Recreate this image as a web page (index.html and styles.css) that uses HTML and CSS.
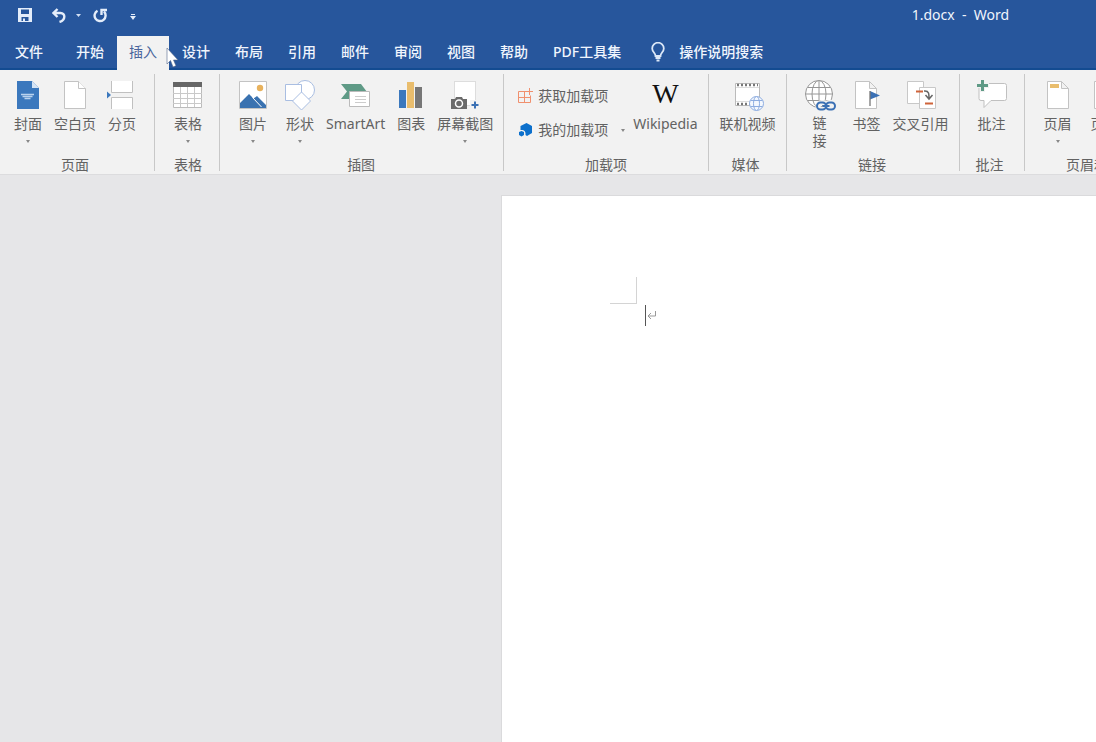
FILE: index.html
```html
<!DOCTYPE html>
<html lang="zh-CN">
<head>
<meta charset="utf-8">
<title>1.docx - Word</title>
<link rel="stylesheet" href="styles.css">
</head>
<body>
<header class="top">
  <div class="titlebar">
    <div class="quick">
      <button class="qbtn" aria-label="保存"><svg width="14" height="14" viewBox="0 0 14 14"><path fill="#e4edfa" fill-rule="evenodd" d="M0 0h14v14H0zM3 1.500v4.500h8V1.500zM3.500 9v4h1.500v-2.500h2V13h3.500V9z"/></svg></button>
      <button class="qbtn undo" aria-label="撤消"><svg width="14" height="15" viewBox="0 0 14 15" fill="none" stroke="#e4edfa" stroke-width="2.400"><path d="M5.500 1 1.500 5l4 4M2 5h6.500c5 0 5.500 7-1 9"/></svg></button>
      <button class="qbtn mini" aria-label="撤消选项"><svg width="5" height="3" viewBox="0 0 5 3"><path fill="#d3e0f3" d="M0 0h5L2.500 3z"/></svg></button>
      <button class="qbtn redo" aria-label="重复"><svg width="14" height="15" viewBox="0 0 14 15" fill="none" stroke="#e4edfa" stroke-width="2.400"><path d="M4.500 2.700a5.500 5.500 0 1 0 6.500 1M8.500 7V2H14"/></svg></button>
      <button class="qbtn custom" aria-label="自定义快速访问工具栏"><svg width="6" height="6" viewBox="0 0 6 6"><path fill="#e4edfa" d="M1 0h4v1H1zM0 2h6L3 6z"/></svg></button>
    </div>
    <h1 class="title">1.docx&nbsp; -&nbsp; Word</h1>
  </div>
  <nav class="tabs">
    <button class="tab file">文件</button>
    <button class="tab">开始</button>
    <button class="tab active">插入</button>
    <button class="tab">设计</button>
    <button class="tab">布局</button>
    <button class="tab">引用</button>
    <button class="tab">邮件</button>
    <button class="tab">审阅</button>
    <button class="tab">视图</button>
    <button class="tab">帮助</button>
    <button class="tab">PDF工具集</button>
    <button class="tab tell"><svg width="14" height="20" viewBox="0 0 14 20" fill="none" stroke="#dce8f8"><path stroke-width="1.800" d="M4.500 14c0-3-3.300-4-3.300-7.500a5.800 5.800 0 0 1 11.600 0C12.800 10 9.500 11 9.500 14z"/><path stroke-width="2" d="M4.500 16h5M5.500 18.500h3"/></svg>操作说明搜索</button>
  </nav>
  <svg class="pointer" width="13" height="21" viewBox="0 0 13 21"><path fill="#fff" stroke="#50658a" stroke-width=".6" d="M1 1v16l3.500-3.500L7 20l3-1.200L7.500 13H12z"/></svg>
</header>

<main>
<div class="ribbon">
  <section class="group pages">
    <div class="items">
      <button class="cmd"><svg class="icon" viewBox="0 0 32 32"><path fill="#3b78bd" d="M5 2h15l7 7v21H5z"/><path fill="#d5e4f5" d="M20 2v7h7z"/><path stroke="#b9d2ee" stroke-width="1.300" d="M9 15.500h13M10.500 17.500h10M12.500 19.500h6"/></svg><span>封面</span><i class="drop"></i></button>
      <button class="cmd"><svg class="icon" viewBox="0 0 32 32" fill="#fff" stroke="#c3c3c3"><path d="M5.500 2.500h14l7 7v20h-21z"/><path d="M19.500 2.500v7h7"/></svg><span>空白页</span></button>
      <button class="cmd"><svg class="icon" viewBox="0 0 32 32"><path fill="#fff" d="M6 2h21v12H6zM6 19h21v11H6z"/><path fill="none" stroke="#c0c0c0" d="M5.500 2v11.500h21V2M5.500 30V18.500h21V30"/><path fill="#3b78bd" d="M1 12.500v7l4-3.500z"/></svg><span>分页</span></button>
    </div>
    <h2>页面</h2>
  </section>
  <section class="group table">
    <div class="items">
      <button class="cmd"><svg class="icon" viewBox="0 0 32 32"><path fill="#fff" stroke="#bbb" d="M1.500 3.500h28v25h-28z"/><path fill="#666" d="M1 3h29v5H1z"/><path stroke="#c9c9c9" d="M1 14.500h29M1 19.500h29M1 24.500h29M8.500 8v20M15.500 8v20M22.500 8v20"/></svg><span>表格</span><i class="drop"></i></button>
    </div>
    <h2>表格</h2>
  </section>
  <section class="group art">
    <div class="items">
      <button class="cmd pic"><svg class="icon" viewBox="0 0 32 32"><path fill="#fff" stroke="#c3c3c3" d="M2.500 2.500h27v27h-27z"/><circle cx="23" cy="9" r="3.200" fill="#e8b25d"/><path fill="#3a72b0" d="M3 27v-3l9-9 4.500 4.500L20 17l9 9v3H3z"/><path stroke="#fff" d="m15.500 18.500 9 9.500"/></svg><span>图片</span><i class="drop"></i></button>
      <button class="cmd"><svg class="icon" viewBox="0 0 32 32" fill="#fff" stroke="#a9bee2"><circle cx="21" cy="11" r="9.500"/><path d="M1.500 5.500h16v16h-16z"/><path d="m17.500 13 9 9-9 9-9-9z"/></svg><span>形状</span><i class="drop"></i></button>
      <button class="cmd"><svg class="icon" viewBox="0 0 32 32"><path fill="#5f9a86" d="M1 5h20l6 8-3 7H1l6-7.500z"/><path fill="#fff" stroke="#bbb" d="M9.500 12.500h20v15h-20z"/><path stroke="#ccc" d="M15 17.500h11M15 20.500h11M15 23.500h11"/></svg><span>SmartArt</span></button>
      <button class="cmd"><svg class="icon" viewBox="0 0 32 32"><path fill="#3b78bd" d="M4 11h7v18H4z"/><path fill="#e9bd6d" d="M12 3h7v26h-7z"/><path fill="#777" d="M20 8h7v21h-7z"/></svg><span>图表</span></button>
      <button class="cmd"><svg class="icon" viewBox="0 0 32 32"><path fill="#fff" stroke="#c3c3c3" stroke-dasharray="1 1" d="M5.500 2.500h21v24h-21z"/><path fill="#6b6b6b" d="M2 20h4l1-2h6l1 2h4v10H2z"/><circle cx="10" cy="24.500" r="3.500" fill="none" stroke="#fff" stroke-width="1.500"/><path fill="#f2f2f2" d="M21 21h11v11H21z"/><path stroke="#3b70b4" stroke-width="2" d="M26 22.500v7M22.500 26h7"/></svg><span>屏幕截图</span><i class="drop"></i></button>
    </div>
    <h2>插图</h2>
  </section>
  <section class="group addins">
    <div class="items">
      <div class="stack">
        <button class="small"><svg width="15" height="16" viewBox="0 0 15 16" fill="none" stroke="#f0906e"><path d="M8.500 3.500h-8v11h12v-7M.5 9.500h12M6.500 3.500v11M11.500 0v7M8 3.500h7"/></svg>获取加载项</button>
        <button class="small"><svg width="15" height="16" viewBox="0 0 15 16"><path fill="#0c70cc" d="m8.500 1 5.500 3v7l-5 3-1.500-1C8 9.500 6 7.500 2.500 8V4zM1 10l2.500-1L6 10v3l-2.500 1.500L1 13z"/></svg>我的加载项<i class="drop"></i></button>
      </div>
      <button class="cmd"><span class="icon wiki" aria-hidden="true">W</span><span>Wikipedia</span></button>
    </div>
    <h2>加载项</h2>
  </section>
  <section class="group media">
    <div class="items">
      <button class="cmd"><svg class="icon" viewBox="0 0 32 32"><path fill="#fff" stroke="#bbb" d="M3.500 4.500h24v22h-24z"/><path stroke="#777" stroke-width="2.500" stroke-dasharray="2 2" d="M5 6h21M5 25h21"/><path stroke="#ddd" d="M4 8.500h23M4 22.500h23"/><g fill="#f4f8fe" stroke="#8eade0"><circle cx="24.500" cy="24.500" r="7"/><ellipse cx="24.500" cy="24.500" rx="3" ry="7"/><path d="M18.500 21.500h12M18.500 27.500h12"/></g></svg><span>联机视频</span></button>
    </div>
    <h2>媒体</h2>
  </section>
  <section class="group links">
    <div class="items">
      <button class="cmd narrow"><svg class="icon" viewBox="0 0 32 32"><g fill="#fff" stroke="#969696"><circle cx="15" cy="15" r="13.500"/><ellipse cx="15" cy="15" rx="7" ry="13.500"/><path d="M15 1.500v27M1.500 15h27M4 8.500h22M4 21.500h22"/></g><g fill="none" stroke="#f2f2f2" stroke-width="5"><rect x="14" y="23.500" width="9" height="7" rx="3.500"/><rect x="21.500" y="23.500" width="9" height="7" rx="3.500"/></g><g fill="none" stroke="#3b70b4" stroke-width="2"><rect x="13" y="23.500" width="9" height="7" rx="3.500"/><rect x="22" y="23.500" width="9" height="7" rx="3.500"/><path d="M18.500 27h7"/></g></svg><span>链接</span></button>
      <button class="cmd"><svg class="icon" viewBox="0 0 32 32"><path fill="#fff" stroke="#c3c3c3" d="M4.500 2.500h14l7 7v20h-21zM18.500 2.500v7h7"/><path fill="#3b70b4" d="m19 12 10 4.500-10 4z"/><path stroke="#777" stroke-width="1.300" d="M19 12v15"/></svg><span>书签</span></button>
      <button class="cmd"><svg class="icon" viewBox="0 0 32 32"><path fill="#fff" stroke="#c8c8c8" d="M14.500 8.500h16v21h-16zM2.500 2.500h16v22h-16z"/><path fill="#fff" d="M15 9h15v20H19v-4h-4z"/><path stroke="#cf643b" stroke-width="2" d="M11 12.500h7M20 24.500h8"/><path fill="none" stroke="#666" stroke-width="1.500" d="M19 12h1c4 0 4 3 4 7M20.500 16l3.500 4 3.500-4"/></svg><span>交叉引用</span></button>
    </div>
    <h2>链接</h2>
  </section>
  <section class="group comment">
    <div class="items">
      <button class="cmd"><svg class="icon" viewBox="0 0 32 32"><path fill="#fff" stroke="#c0c0c0" d="M5.500 4.500h23q2 0 2 2v13q0 2-2 2H15l-7 7v-7H5q-2 0-2-2v-13q0-2 2.500-2z"/><path stroke="#f2f2f2" stroke-width="5" d="M6.500 0v13M0 6.500h13"/><path stroke="#5f9a86" stroke-width="3" d="M6.500 1v11M1 6.500h11"/></svg><span>批注</span></button>
    </div>
    <h2>批注</h2>
  </section>
  <section class="group header">
    <div class="items">
      <button class="cmd pic"><svg class="icon" viewBox="0 0 32 32"><path fill="#fff" stroke="#c3c3c3" d="M5.500 2.500h14l7 7v20h-21zM19.500 2.500v7h7"/><path fill="#e9bd6d" d="M8 5h9v4H8z"/></svg><span>页眉</span><i class="drop"></i></button>
      <button class="cmd"><svg class="icon" viewBox="0 0 32 32"><path fill="#fff" stroke="#c3c3c3" d="M5.500 2.500h14l7 7v20h-21zM19.500 2.500v7h7"/><path fill="#e9bd6d" d="M8 23h9v4H8z"/></svg><span>页脚</span><i class="drop"></i></button>
      <button class="cmd"><svg class="icon" viewBox="0 0 32 32"><path fill="#fff" stroke="#c3c3c3" d="M5.500 2.500h21v27h-21z"/></svg><span>页码</span><i class="drop"></i></button>
    </div>
    <h2>页眉和页脚</h2>
  </section>
</div>

<div class="workspace">
  <article class="page">
    <div class="corner"></div>
    <p class="line"><span class="caret"></span><svg width="9" height="9" viewBox="0 0 9 9" fill="none" stroke="#999"><path d="M8.500 0v5H1M4 2 1 5l3 3"/></svg></p>
  </article>
</div>
</main>
</body>
</html>
```
FILE: styles.css
```css
* { box-sizing: border-box; }

body {
  margin: 0;
  min-height: 100vh;
  display: flex;
  flex-direction: column;
  overflow: hidden;
  background: #e6e6e8;
  font: 14px/20px "Noto Sans", "Noto Sans CJK SC", sans-serif;
  color: #626262;
}

button {
  border: 0;
  padding: 0;
  background: none;
  font: inherit;
  color: inherit;
  white-space: nowrap;
}

h1, h2, p { margin: 0; font: inherit; }

main { flex: 1; display: flex; flex-direction: column; }

/* Title bar and tabs */
.top {
  position: relative;
  background: #27569c;
  color: #f0f5fd;
  border-bottom: 2px solid #134b91;
}

.titlebar {
  display: flex;
  justify-content: space-between;
  align-items: center;
  height: 36px;
  padding: 0 87px 6px 18px;
}

.quick { display: flex; align-items: center; }
.qbtn { display: flex; }
.undo { margin-left: 20px; }
.mini { margin-left: 10px; }
.redo { margin-left: 12px; }
.custom { margin-left: 23px; padding-top: 4px; }

.tabs { display: flex; gap: 1px; height: 32px; font-weight: 500; }
.tab { padding: 0 12px; }
.file { padding: 0 15px; margin-right: 5px; }

.active {
  background: #f2f2f2;
  color: #4a659c;
  font-weight: 400;
  margin-bottom: -2px;
  padding-bottom: 2px;
}

.tell {
  display: flex;
  align-items: center;
  gap: 14px;
  margin-left: 5px;
}

.pointer {
  position: absolute;
  left: 166px;
  top: 47px;
}

/* Ribbon */
.ribbon {
  display: flex;
  overflow: hidden;
  padding: 4px 0 3px;
  background: #f2f2f2;
  border-bottom: 1px solid #dcdcde;
}

.group {
  flex: none;
  display: flex;
  flex-direction: column;
  justify-content: space-between;
  height: 97px;
  border-right: 1px solid #c8c8c8;
}

.group h2 { height: 16px; text-align: center; }
.items { display: flex; justify-content: center; padding-top: 5px; }

.cmd {
  display: flex;
  flex-direction: column;
  align-items: center;
  padding: 0 6px;
}

.icon { width: 32px; height: 32px; margin: 0 -2px 3px; }

.drop {
  border: 2px solid transparent;
  border-top: 3px solid #888;
  border-bottom: 0;
  margin-top: 6px;
}

.pages { padding: 0 12px 0 8px; }
.table { padding: 0 11px 0 13px; }
.art { padding: 0 4px 0 13px; }
.pic { margin-right: 7px; }
.addins { padding: 0 4px 0 14px; }
.media { padding: 0 4px 0 5px; }
.links { padding: 0 4px 0 13px; }
.comment { padding: 0 12px; }
.header { padding: 0 12px 0 13px; }

.art h2, .addins h2, .links h2 { margin-right: 10px; }
.media h2 { margin-right: 4px; }
.comment h2 { margin-right: 4px; }

.narrow { margin-right: 7px; }
.narrow span { width: 14px; line-height: 18px; white-space: normal; }

.stack {
  display: flex;
  flex-direction: column;
  align-items: flex-start;
  gap: 14px;
  padding-top: 7px;
  margin-right: 2px;
}

.small { display: flex; align-items: center; gap: 5px; }
.small .drop { margin: 0 0 0 8px; }

.wiki {
  width: auto;
  font: 28px/30px "Liberation Serif", serif;
  color: #111;
}

/* Document */
.workspace {
  flex: 1;
  display: flex;
  padding: 20px 0 0 501px;
}

.page {
  flex: 1;
  padding: 81px 0 0 108px;
  background: #fff;
  border: 1px solid #dadadc;
  border-width: 1px 0 0 1px;
}

.corner {
  width: 27px;
  height: 27px;
  border: 1px solid #d4d4d4;
  border-width: 0 1px 1px 0;
}

.line { display: flex; align-items: center; gap: 1px; padding: 1px 0 0 35px; }
.caret { width: 1px; height: 21px; background: #555; }
```
